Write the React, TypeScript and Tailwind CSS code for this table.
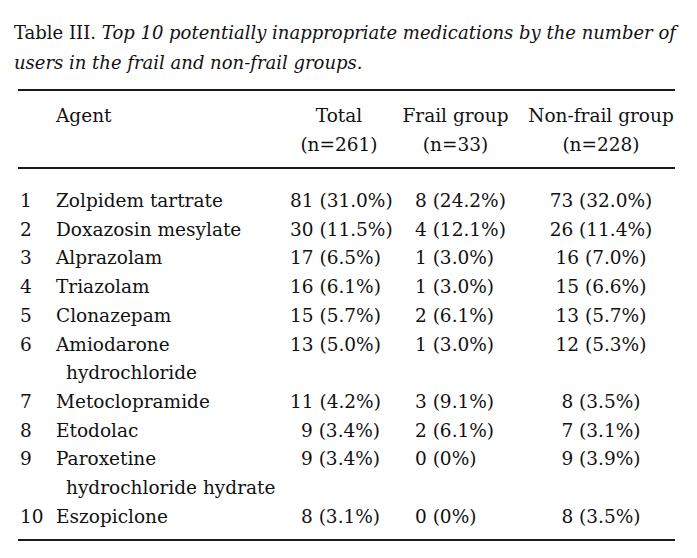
import React from "react";

type Row = {
  n: string;
  agent: string[];
  total: string;
  totalSingle?: boolean;
  frail: string;
  nonfrail: string;
};

const rows: Row[] = [
  { n: "1", agent: ["Zolpidem tartrate"], total: "81 (31.0%)", frail: "8 (24.2%)", nonfrail: "73 (32.0%)" },
  { n: "2", agent: ["Doxazosin mesylate"], total: "30 (11.5%)", frail: "4 (12.1%)", nonfrail: "26 (11.4%)" },
  { n: "3", agent: ["Alprazolam"], total: "17 (6.5%)", frail: "1 (3.0%)", nonfrail: "16 (7.0%)" },
  { n: "4", agent: ["Triazolam"], total: "16 (6.1%)", frail: "1 (3.0%)", nonfrail: "15 (6.6%)" },
  { n: "5", agent: ["Clonazepam"], total: "15 (5.7%)", frail: "2 (6.1%)", nonfrail: "13 (5.7%)" },
  { n: "6", agent: ["Amiodarone", "hydrochloride"], total: "13 (5.0%)", frail: "1 (3.0%)", nonfrail: "12 (5.3%)" },
  { n: "7", agent: ["Metoclopramide"], total: "11 (4.2%)", frail: "3 (9.1%)", nonfrail: "8 (3.5%)" },
  { n: "8", agent: ["Etodolac"], total: "9 (3.4%)", totalSingle: true, frail: "2 (6.1%)", nonfrail: "7 (3.1%)" },
  { n: "9", agent: ["Paroxetine", "hydrochloride hydrate"], total: "9 (3.4%)", totalSingle: true, frail: "0 (0%)", nonfrail: "9 (3.9%)" },
  { n: "10", agent: ["Eszopiclone"], total: "8 (3.1%)", totalSingle: true, frail: "0 (0%)", nonfrail: "8 (3.5%)" },
];

export default function App() {
  return (
    <div
      className="w-[697px] h-[558px] bg-white text-[#111] overflow-hidden"
      style={{ fontFamily: '"DejaVu Serif", "Liberation Serif", serif' }}
    >
      <div className="pt-[18px] pl-[14px] text-[18px] leading-[30px] whitespace-nowrap">
        <div>
          Table III. <span className="italic">Top 10 potentially inappropriate medications by the number of</span>
        </div>
        <div className="italic">users in the frail and non-frail groups.</div>
      </div>

      <div className="mx-[18px] mt-[11px] w-[657px] text-[18.5px]">
        <div className="h-[2px] bg-[#1a1a1a]" />
        <div className="grid grid-cols-[36px_226px_118px_129px_148px] leading-[29px] pt-[10px] pb-[8px]">
          <div />
          <div className="pl-[2px]">Agent</div>
          <div className="text-center">
            <div>Total</div>
            <div>(n=261)</div>
          </div>
          <div className="text-center pr-[14px]">
            <div className="whitespace-nowrap">Frail group</div>
            <div>(n=33)</div>
          </div>
          <div className="text-center">
            <div className="whitespace-nowrap">Non-frail group</div>
            <div>(n=228)</div>
          </div>
        </div>
        <div className="h-[2px] bg-[#1a1a1a]" />
        <div className="pt-[18px] pb-[8px] leading-[28.7px]">
          {rows.map((r) => (
            <div key={r.n} className="grid grid-cols-[36px_226px_118px_129px_148px]">
              <div className="pl-[2px]">{r.n}</div>
              <div className="pl-[2px] whitespace-nowrap">
                <div>{r.agent[0]}</div>
                {r.agent[1] && <div className="pl-[10px]">{r.agent[1]}</div>}
              </div>
              <div className={r.totalSingle ? "pl-[21px] whitespace-nowrap" : "pl-[10px] whitespace-nowrap"}>
                {r.total}
              </div>
              <div className="pl-[17px] whitespace-nowrap">{r.frail}</div>
              <div className="text-center whitespace-nowrap">{r.nonfrail}</div>
            </div>
          ))}
        </div>
        <div className="h-[2px] bg-[#1a1a1a]" />
      </div>
    </div>
  );
}
